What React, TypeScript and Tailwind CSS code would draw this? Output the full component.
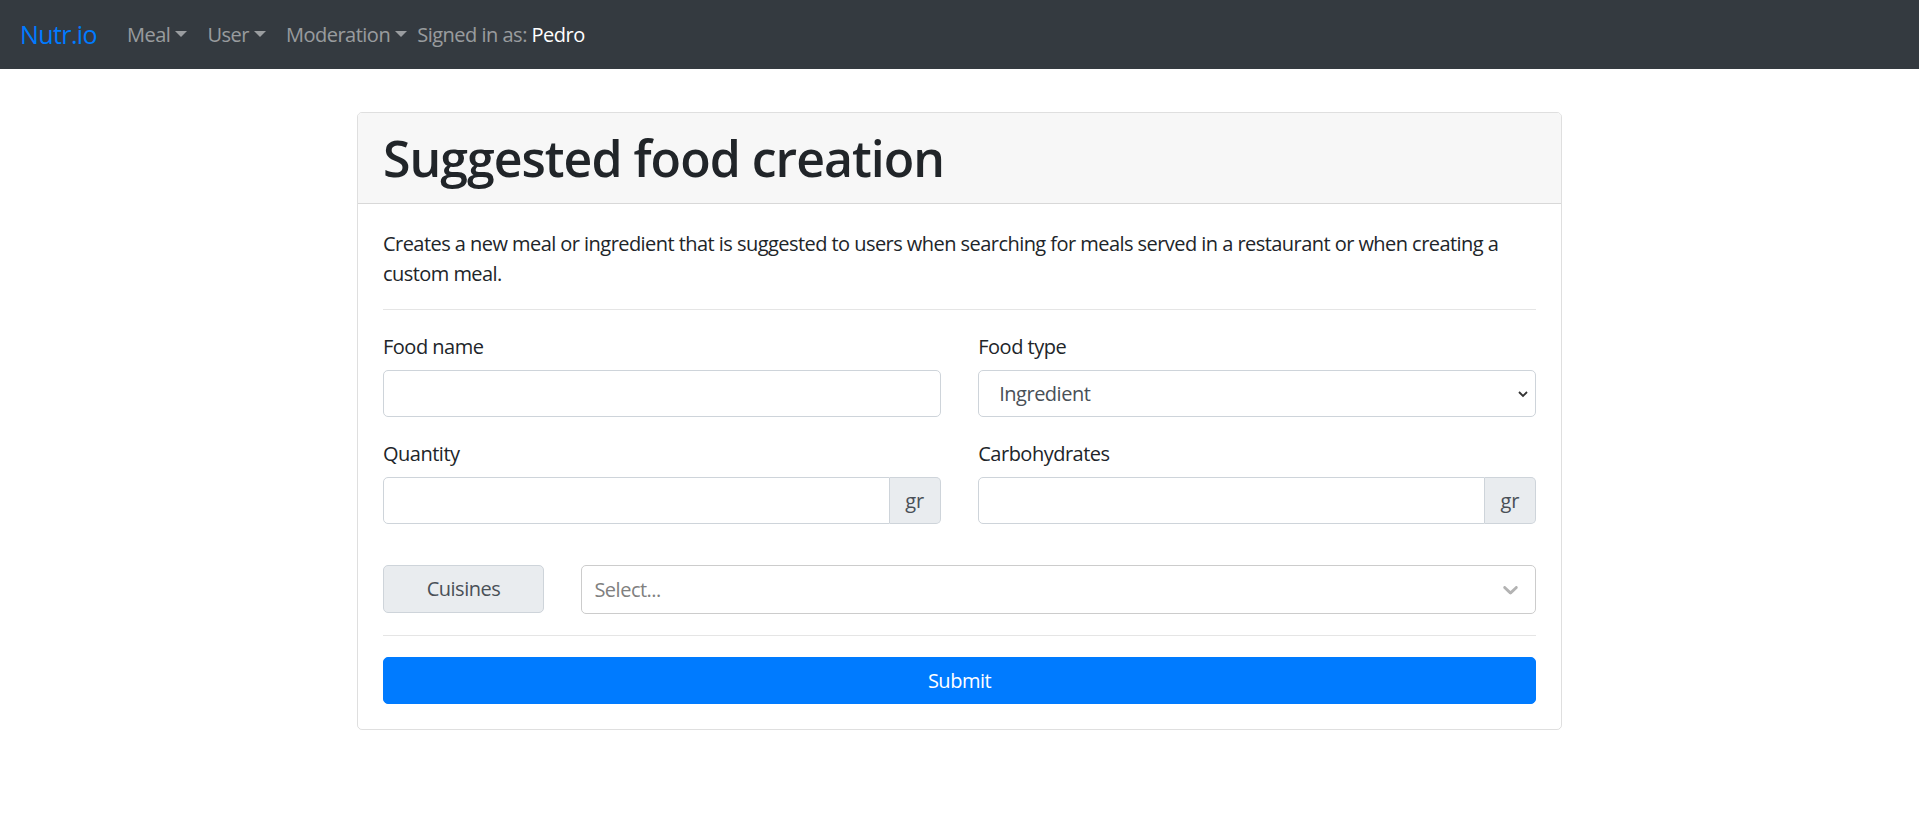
import React from "react";

function Caret() {
  return (
    <span className="inline-block ml-[5px] align-[5px] w-0 h-0 border-t-[6px] border-x-[6px] border-b-0 border-t-current border-x-transparent" />
  );
}

function Label({ children }: { children: React.ReactNode }) {
  return <label className="block pt-[2px] mb-[8px] leading-[30px] text-[20px] text-[#212529] tracking-[-0.5px]">{children}</label>;
}

function TextInput() {
  return <div className="h-[47px] bg-white border border-[#ced4da] rounded-[5px]" />;
}

function AppendInput() {
  return (
    <div className="flex h-[47px]">
      <div className="flex-1 bg-white border border-[#ced4da] rounded-l-[5px]" />
      <div className="w-[51px] flex items-center justify-center bg-[#e9ecef] border border-l-0 border-[#ced4da] rounded-r-[5px] text-[#495057] text-[20px] leading-[30px]">
        gr
      </div>
    </div>
  );
}

export default function App() {
  return (
    <div className="min-h-screen bg-white text-[#212529]" style={{ fontFamily: '"Open Sans", "Noto Sans", sans-serif' }}>
      <nav className="h-[69px] bg-[#343a40] flex items-center px-[20px] tracking-[-0.5px]">
        <span className="text-[25px] leading-[37px] text-[#007bff] mr-[20px] tracking-[-0.6px]">Nutr.io</span>
        <div className="flex items-center text-[20px] leading-[30px] text-[rgba(255,255,255,0.5)]">
          <span className="px-[10px]">Meal<Caret /></span>
          <span className="px-[10px]">User<Caret /></span>
          <span className="px-[10px]">Moderation<Caret /></span>
          <span>
            Signed in as: <span className="text-white">Pedro</span>
          </span>
        </div>
      </nav>

      <div className="w-[1205px] mx-auto mt-[43px] border border-[rgba(0,0,0,0.125)] rounded-[5px] overflow-hidden">
        <div className="bg-[#f7f7f7] px-[25px] py-[15px] border-b border-[rgba(0,0,0,0.125)]">
          <h1 className="text-[50px] leading-[60px] font-[550] text-[#212529] tracking-[-1px]">Suggested food creation</h1>
        </div>
        <div className="p-[25px]">
          <p className="text-[20px] leading-[30px] mb-[20px] tracking-[-0.55px]">
            Creates a new meal or ingredient that is suggested to users when searching for meals served in a restaurant or when creating a custom meal.
          </p>
          <hr className="border-t border-[rgba(0,0,0,0.1)] mb-[20px]" />

          <div className="grid grid-cols-12 gap-x-[37.5px]">
            <div className="col-span-6 mb-[20px]">
              <Label>Food name</Label>
              <TextInput />
            </div>
            <div className="col-span-6 mb-[20px]">
              <Label>Food type</Label>
              <div className="h-[47px] bg-white border border-[#ced4da] rounded-[5px] flex items-center pl-[20px] pr-[6px] text-[20px] text-[#495057] tracking-[-0.5px]">
                <span className="flex-1">Ingredient</span>
                <svg width="12" height="12" viewBox="0 0 12 12" fill="none">
                  <path d="M2 4 L6 8 L10 4" stroke="#333" strokeWidth="1.8" />
                </svg>
              </div>
            </div>
            <div className="col-span-6 mb-[20px]">
              <Label>Quantity</Label>
              <AppendInput />
            </div>
            <div className="col-span-6 mb-[20px]">
              <Label>Carbohydrates</Label>
              <AppendInput />
            </div>
          </div>

          <div className="grid grid-cols-12 gap-x-[37.5px] mt-[21px]">
            <div className="col-span-2 h-[48px] flex items-center justify-center bg-[#e9ecef] border border-[#ced4da] rounded-[5px] text-[20px] text-[#495057] tracking-[-0.5px]">
              Cuisines
            </div>
            <div className="col-span-10 h-[49px] bg-white border border-[#cccccc] rounded-[5px] flex items-center pl-[12px] pr-[10px]">
              <span className="flex-1 text-[20px] text-[#808080] tracking-[-0.5px]">Select...</span>
              <svg width="25" height="25" viewBox="0 0 20 20" className="mr-[2px]">
                <path
                  fill="#b3b3b3"
                  d="M4.516 7.548c0.436-0.446 1.043-0.481 1.576 0l3.908 3.747 3.908-3.747c0.533-0.481 1.141-0.446 1.574 0 0.436 0.445 0.408 1.197 0 1.615-0.406 0.418-4.695 4.502-4.695 4.502-0.217 0.223-0.502 0.335-0.787 0.335s-0.57-0.112-0.789-0.335c0 0-4.287-4.084-4.695-4.502s-0.436-1.17 0-1.615z"
                />
              </svg>
            </div>
          </div>

          <hr className="border-t border-[rgba(0,0,0,0.1)] mt-[21px] mb-[21px]" />

          <button className="w-full h-[47px] bg-[#007bff] text-white text-[20px] rounded-[5px] border border-[#007bff] tracking-[-0.5px]">
            Submit
          </button>
        </div>
      </div>
    </div>
  );
}
